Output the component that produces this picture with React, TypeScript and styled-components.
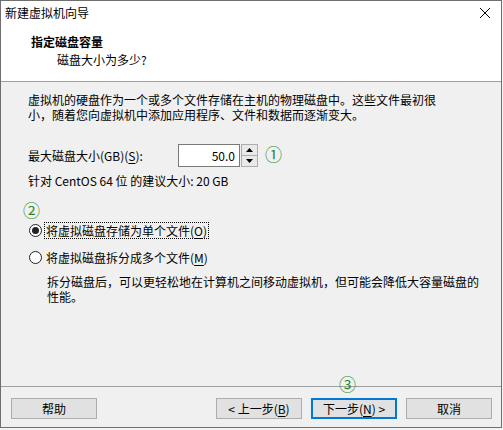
import React from 'react';
import styled, { createGlobalStyle } from 'styled-components';

const GlobalStyle = createGlobalStyle`
  html, body {
    margin: 0;
    padding: 0;
    background: #f3f3f3;
  }
  * {
    box-sizing: border-box;
  }
`;

const font = `"Noto Sans CJK SC", "Noto Sans", sans-serif`;

const Window = styled.div`
  position: relative;
  width: 502px;
  height: 428px;
  border: 1px solid #6f6f6f;
  display: flex;
  flex-direction: column;
  font-family: ${font};
  font-size: 12px;
  color: #000;
  background: #f0f0f0;
`;

const TitleBar = styled.div`
  height: 24px;
  display: flex;
  align-items: center;
  justify-content: space-between;
  padding: 0 10px 0 4px;
  background: #fff;
  line-height: 24px;
`;

const CloseIcon = () => (
  <svg width="12" height="12" viewBox="0 0 12 12">
    <path d="M1 1 L11 11 M11 1 L1 11" stroke="#000" strokeWidth="1" fill="none" />
  </svg>
);

const Header = styled.div`
  background: #fff;
  padding: 9px 0 13px 30px;
  border-bottom: 1px solid #a0a0a0;
`;

const HeaderTitle = styled.div`
  font-weight: bold;
  line-height: 16px;
`;

const HeaderSub = styled.div`
  margin-top: 2px;
  padding-left: 26px;
  line-height: 16px;
`;

const Body = styled.div`
  flex: 1;
  padding: 10px 0 0 27px;
  display: flex;
  flex-direction: column;
  align-items: flex-start;
`;

const Paragraph = styled.p<{ $indent?: number; $top?: number }>`
  margin: ${(p) => p.$top ?? 0}px 0 0 ${(p) => p.$indent ?? 0}px;
  line-height: 15px;
`;

const SizeRow = styled.div`
  margin-top: 22px;
  display: flex;
  align-items: center;
  height: 23px;
`;

const Label = styled.span`
  width: 150px;
  line-height: 16px;
`;

const NumberBox = styled.div`
  width: 62px;
  height: 23px;
  border: 1px solid #7a7a7a;
  background: #fff;
  text-align: right;
  padding-right: 4px;
  line-height: 21px;
`;

const Spinner = styled.div`
  width: 17px;
  height: 23px;
  margin-left: 1px;
  border: 1px solid #adadad;
  display: flex;
  flex-direction: column;
  background: #fff;
`;

const SpinButton = styled.div<{ $down?: boolean }>`
  flex: 1;
  display: flex;
  align-items: center;
  justify-content: center;
  background: #e9e9e9;
  border-top: ${(p) => (p.$down ? '1px solid #adadad' : 'none')};
`;

const Arrow = ({ down }: { down?: boolean }) => (
  <svg width="7" height="4" viewBox="0 0 7 4">
    {down ? <path d="M0 0 H7 L3.5 4 Z" fill="#000" /> : <path d="M0 4 H7 L3.5 0 Z" fill="#000" />}
  </svg>
);

const Marker = styled.span`
  color: #2a8a2a;
  font-size: 17px;
  line-height: 16px;
`;

const SizeMarker = styled(Marker)`
  margin-left: 7px;
  margin-top: -4px;
`;

const Info = styled.div`
  margin-top: 6px;
  line-height: 16px;
`;

const OptionsMarker = styled(Marker)`
  margin: 13px 0 0 -5px;
`;

const RadioRow = styled.label<{ $top: number }>`
  margin-top: ${(p) => p.$top}px;
  height: 17px;
  display: flex;
  align-items: center;
  padding-left: 1px;
`;

const RadioCircle = styled.span<{ $checked?: boolean }>`
  width: 13px;
  height: 13px;
  border-radius: 50%;
  border: 1px solid #222;
  background: #fff;
  display: flex;
  align-items: center;
  justify-content: center;
  &::after {
    content: '';
    display: ${(p) => (p.$checked ? 'block' : 'none')};
    width: 7px;
    height: 7px;
    border-radius: 50%;
    background: #222;
  }
`;

const RadioText = styled.span<{ $focus?: boolean }>`
  margin-left: 2px;
  height: 17px;
  line-height: 15px;
  padding: 0 1px;
  border: 1px dotted ${(p) => (p.$focus ? '#000' : 'transparent')};
`;

const Key = styled.span`
  text-decoration: underline;
  text-underline-offset: 2px;
`;

const Footer = styled.div`
  position: relative;
  border-top: 1px solid #a0a0a0;
  padding: 11px 9px 8px 10px;
  display: flex;
  gap: 9px;
`;

const FooterMarker = styled(Marker)`
  position: absolute;
  left: 338px;
  top: -11px;
`;

const Spacer = styled.div`
  flex: 1;
`;

const Button = styled.div<{ $primary?: boolean }>`
  width: 86px;
  height: 21px;
  background: #e1e1e1;
  border: ${(p) => (p.$primary ? '2px solid #0078d7' : '1px solid #adadad')};
  display: flex;
  align-items: center;
  justify-content: center;
  line-height: 16px;
`;

export default function App() {
  return (
    <>
      <GlobalStyle />
      <Window>
        <TitleBar>
          <span>新建虚拟机向导</span>
          <CloseIcon />
        </TitleBar>
        <Header>
          <HeaderTitle>指定磁盘容量</HeaderTitle>
          <HeaderSub>磁盘大小为多少?</HeaderSub>
        </Header>
        <Body>
          <Paragraph>
            虚拟机的硬盘作为一个或多个文件存储在主机的物理磁盘中。这些文件最初很
            <br />
            小，随着您向虚拟机中添加应用程序、文件和数据而逐渐变大。
          </Paragraph>
          <SizeRow>
            <Label>
              最大磁盘大小(GB)(<Key>S</Key>):
            </Label>
            <NumberBox>50.0</NumberBox>
            <Spinner>
              <SpinButton>
                <Arrow />
              </SpinButton>
              <SpinButton $down>
                <Arrow down />
              </SpinButton>
            </Spinner>
            <SizeMarker>①</SizeMarker>
          </SizeRow>
          <Info>针对 CentOS 64 位 的建议大小: 20 GB</Info>
          <OptionsMarker>②</OptionsMarker>
          <RadioRow $top={4}>
            <RadioCircle $checked />
            <RadioText $focus>
              将虚拟磁盘存储为单个文件(<Key>O</Key>)
            </RadioText>
          </RadioRow>
          <RadioRow $top={10}>
            <RadioCircle />
            <RadioText>
              将虚拟磁盘拆分成多个文件(<Key>M</Key>)
            </RadioText>
          </RadioRow>
          <Paragraph $indent={19} $top={8}>
            拆分磁盘后，可以更轻松地在计算机之间移动虚拟机，但可能会降低大容量磁盘的
            <br />
            性能。
          </Paragraph>
        </Body>
        <Footer>
          <FooterMarker>③</FooterMarker>
          <Button>帮助</Button>
          <Spacer />
          <Button>
            &lt; 上一步(<Key>B</Key>)
          </Button>
          <Button $primary>
            下一步(<Key>N</Key>) &gt;
          </Button>
          <Button>取消</Button>
        </Footer>
      </Window>
    </>
  );
}
